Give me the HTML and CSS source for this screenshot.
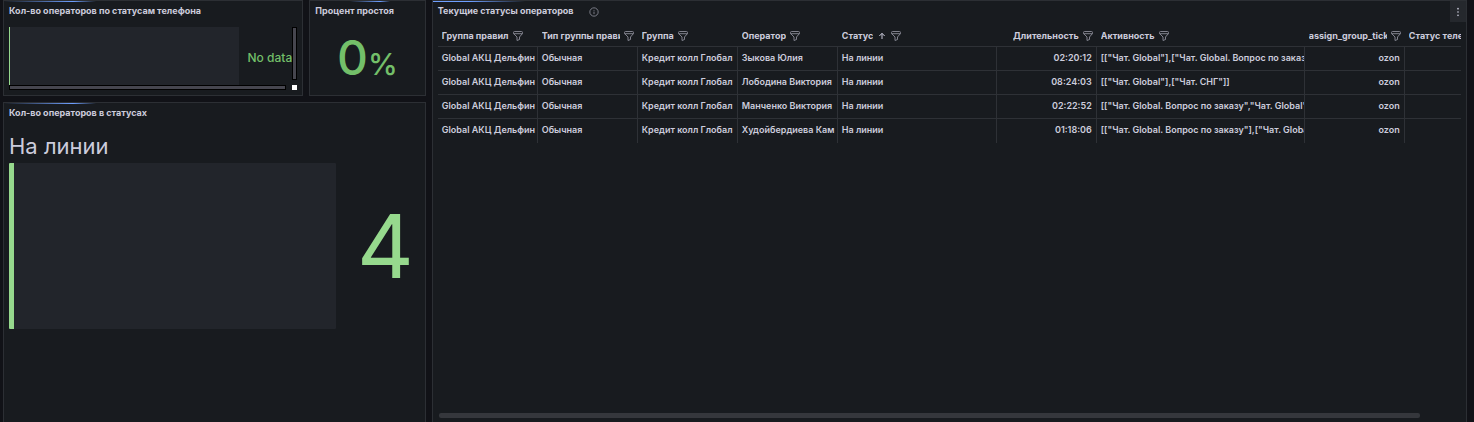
FILE: index.html
```html
<!DOCTYPE html>
<html lang="ru">
<head>
    <meta charset="UTF-8">
    <meta name="viewport" content="width=device-width, initial-scale=1.0">
    <title>Статусы операторов</title>
    <link rel="stylesheet" href="styles.css">
</head>
<body>
    <svg class="sprite" aria-hidden="true">
        <symbol id="filter" viewBox="0 0 10 10">
            <path d="M1.500.5h7a1 1 0 0 1 1 1v1L6.500 6v2.500L4 9.500V6L.5 2.500v-1a1 1 0 0 1 1-1ZM.5 2.700h9" fill="none" stroke="currentColor" stroke-width=".9"/>
        </symbol>
    </svg>

    <main class="dashboard">
        <section class="panel panel-phone">
            <h2>Кол-во операторов по статусам телефона</h2>
            <div class="scroll-box">
                <div class="gauge-small">
                    <div class="track"></div>
                    <span class="no-data">No data</span>
                </div>
                <div class="bar-v"></div>
                <div class="bar-h"></div>
                <div class="corner"></div>
            </div>
        </section>

        <section class="panel panel-idle">
            <h2>Процент простоя</h2>
            <div class="stat">0<span class="unit">%</span></div>
        </section>

        <section class="panel panel-status">
            <h2>Кол-во операторов в статусах</h2>
            <div class="gauge">
                <div class="gauge-title">На линии</div>
                <div class="gauge-row">
                    <div class="track"></div>
                    <div class="gauge-value">4</div>
                </div>
            </div>
        </section>

        <section class="panel panel-table">
            <header class="panel-header">
                <h2>Текущие статусы операторов</h2>
                <button class="icon-btn info" aria-label="Описание">
                    <svg viewBox="0 0 24 24" fill="none" stroke="currentColor" stroke-width="2"><circle cx="12" cy="12" r="10"/><path d="M12 11v6M12 7v2"/></svg>
                </button>
                <button class="icon-btn menu" aria-label="Меню">
                    <svg viewBox="0 0 24 24" fill="currentColor"><circle cx="12" cy="4" r="2"/><circle cx="12" cy="12" r="2"/><circle cx="12" cy="20" r="2"/></svg>
                </button>
            </header>
            <div class="table-wrap">
                <table>
                    <colgroup>
                        <col class="col"><col class="col"><col class="col"><col class="col">
                        <col class="col-status"><col class="col"><col class="col-activity"><col class="col"><col class="col">
                    </colgroup>
                    <thead>
                        <tr>
                            <th><div class="head"><span>Группа правил</span><button class="icon-btn" aria-label="Фильтр"><svg><use href="#filter"/></svg></button></div></th>
                            <th><div class="head"><span>Тип группы правил</span><button class="icon-btn" aria-label="Фильтр"><svg><use href="#filter"/></svg></button></div></th>
                            <th><div class="head"><span>Группа</span><button class="icon-btn" aria-label="Фильтр"><svg><use href="#filter"/></svg></button></div></th>
                            <th><div class="head"><span>Оператор</span><button class="icon-btn" aria-label="Фильтр"><svg><use href="#filter"/></svg></button></div></th>
                            <th aria-sort="ascending"><div class="head"><span>Статус</span><svg class="sort" viewBox="0 0 24 24" fill="none" stroke="currentColor" stroke-width="3"><path d="M12 21V4M4 12l8-8 8 8"/></svg><button class="icon-btn" aria-label="Фильтр"><svg><use href="#filter"/></svg></button></div></th>
                            <th><div class="head right"><span>Длительность</span><button class="icon-btn" aria-label="Фильтр"><svg><use href="#filter"/></svg></button></div></th>
                            <th><div class="head"><span>Активность</span><button class="icon-btn" aria-label="Фильтр"><svg><use href="#filter"/></svg></button></div></th>
                            <th><div class="head right"><span>assign_group_ticket</span><button class="icon-btn" aria-label="Фильтр"><svg><use href="#filter"/></svg></button></div></th>
                            <th><div class="head"><span>Статус телефона</span></div></th>
                        </tr>
                    </thead>
                    <tbody>
                        <tr>
                            <td>Global АКЦ Дельфин</td>
                            <td>Обычная</td>
                            <td>Кредит колл Глобал</td>
                            <td>Зыкова Юлия</td>
                            <td>На линии</td>
                            <td class="right">02:20:12</td>
                            <td>[["Чат. Global"],["Чат. Global. Вопрос по заказу"]]</td>
                            <td class="right">ozon</td>
                            <td></td>
                        </tr>
                        <tr>
                            <td>Global АКЦ Дельфин</td>
                            <td>Обычная</td>
                            <td>Кредит колл Глобал</td>
                            <td>Лободина Виктория</td>
                            <td>На линии</td>
                            <td class="right">08:24:03</td>
                            <td>[["Чат. Global"],["Чат. СНГ"]]</td>
                            <td class="right">ozon</td>
                            <td></td>
                        </tr>
                        <tr>
                            <td>Global АКЦ Дельфин</td>
                            <td>Обычная</td>
                            <td>Кредит колл Глобал</td>
                            <td>Манченко Виктория</td>
                            <td>На линии</td>
                            <td class="right">02:22:52</td>
                            <td>[["Чат. Global. Вопрос по заказу","Чат. Global"]]</td>
                            <td class="right">ozon</td>
                            <td></td>
                        </tr>
                        <tr>
                            <td>Global АКЦ Дельфин</td>
                            <td>Обычная</td>
                            <td>Кредит колл Глобал</td>
                            <td>Худойбердиева Кам</td>
                            <td>На линии</td>
                            <td class="right">01:18:06</td>
                            <td>[["Чат. Global. Вопрос по заказу"],["Чат. Global"]]</td>
                            <td class="right">ozon</td>
                            <td></td>
                        </tr>
                    </tbody>
                </table>
            </div>
            <div class="table-scroll"><div class="thumb"></div></div>
        </section>
    </main>
</body>
</html>
```

FILE: styles.css
```css
* {
    box-sizing: border-box;
}

body {
    margin: 0;
    background: #111217;
    color: #ccccdc;
    font-family: Inter, "Liberation Sans", sans-serif;
    font-size: 9px;
    line-height: 16px;
}

.sprite {
    display: none;
}

.dashboard {
    display: grid;
    grid-template-columns: repeat(24, minmax(0, 1fr));
    grid-template-rows: 96px 1fr;
    gap: 6px;
    min-height: 100vh;
    padding: 0 7px 0 3px;
}

.panel {
    position: relative;
    display: flex;
    flex-direction: column;
    padding: 1px 5px 5px;
    background: #181b1f;
    border: 1px solid #2c2f34;
}

/* loading indicator on the top edge */
.panel::before {
    content: "";
    position: absolute;
    top: 0;
    left: 0;
    width: 92px;
    height: 1px;
    background: linear-gradient(90deg, transparent, #6e9fff 75%, transparent);
}

.panel-phone {
    grid-column: span 5;
}

.panel-idle {
    grid-column: span 2;
}

.panel-idle::before {
    left: 40px;
    width: 40px;
}

.panel-status {
    grid-column: span 7;
    border-bottom: 0;
}

.panel-table {
    grid-column: 8 / -1;
    grid-row: 1 / 3;
    border-bottom: 0;
    padding-bottom: 4px;
}

.panel-table::before {
    background: linear-gradient(90deg, #6e9fff 40%, transparent);
}

h2 {
    margin: 0;
    font-size: 9px;
    font-weight: 700;
    line-height: 18px;
    white-space: nowrap;
}

/* phone status */
.scroll-box {
    flex: 1;
    display: grid;
    grid-template-columns: 1fr 5px;
    grid-template-rows: 1fr 5px;
    margin-top: 7px;
}

.gauge-small {
    display: flex;
    align-items: center;
    gap: 9px;
    overflow: hidden;
}

.gauge-small .track {
    flex: 1;
    align-self: stretch;
    background: #22252b;
    border-left: 1px solid #96d98d;
}

.no-data {
    padding-top: 4px;
    color: #73bf69;
    font-size: 12px;
    font-weight: 500;
}

.bar-v,
.bar-h {
    background: #46464f;
    border: 1px solid #000;
}

.bar-v {
    margin-bottom: 5px;
}

.bar-h {
    margin-right: 6px;
}

.corner {
    background: #fff;
}

/* idle percent */
.stat {
    flex: 1;
    padding-top: 6px;
    color: #73bf69;
    font-size: 48px;
    font-weight: 500;
    line-height: 64px;
    text-align: center;
}

.unit {
    font-size: 30px;
}

/* status gauge */
.gauge {
    margin-top: 9px;
}

.gauge-title {
    padding-bottom: 2px;
    font-size: 22px;
    line-height: 30px;
}

.gauge-row {
    display: flex;
    align-items: center;
    height: 166px;
}

.gauge-row .track {
    flex: 1;
    height: 100%;
    background: #22252b;
    border-left: 5px solid #96d98d;
    border-radius: 1px;
}

.gauge-value {
    padding: 0 6px 0 21px;
    color: #96d98d;
    font-size: 88px;
    font-weight: 400;
    line-height: 96px;
}

/* table */
.panel-header {
    display: flex;
    align-items: center;
}

.icon-btn {
    display: flex;
    flex: none;
    align-items: center;
    justify-content: center;
    padding: 0;
    border: 0;
    background: none;
    color: #8c8d99;
    cursor: pointer;
}

.icon-btn svg {
    width: 10px;
    height: 10px;
}

.info {
    margin: 2px 0 0 15px;
}

.menu {
    position: absolute;
    top: 0;
    right: 0;
    width: 16px;
    height: 21px;
    background: #25282d;
    color: #ccccdc;
}

.table-wrap {
    flex: 1;
    overflow: hidden;
    margin-top: 6px;
}

table {
    width: 1067px;
    table-layout: fixed;
    border-collapse: separate;
    border-spacing: 0;
}

.col {
    width: 100px;
}

.col-status {
    width: 159px;
}

.col-activity {
    width: 208px;
}

th,
td {
    padding: 0 4px;
    border-bottom: 1px solid #2e3136;
    text-align: left;
    white-space: nowrap;
    overflow: hidden;
}

th {
    height: 21px;
    font-weight: 700;
}

td {
    height: 24px;
    padding-bottom: 2px;
    padding-right: 0;
    border-right: 1px solid #2e3136;
    font-weight: 600;
}

tbody tr:last-child td {
    border-bottom: 0;
}

td.right {
    padding-right: 4px;
    text-align: right;
}

.head {
    display: flex;
    align-items: center;
    gap: 4px;
}

.head span {
    overflow: hidden;
}

.head.right {
    justify-content: flex-end;
}

.sort {
    width: 8px;
    height: 8px;
    margin: 0 1px;
}

.table-scroll {
    margin-left: 1px;
}

.thumb {
    width: 96%;
    height: 5px;
    background: #35373c;
    border-radius: 2px;
}
```
